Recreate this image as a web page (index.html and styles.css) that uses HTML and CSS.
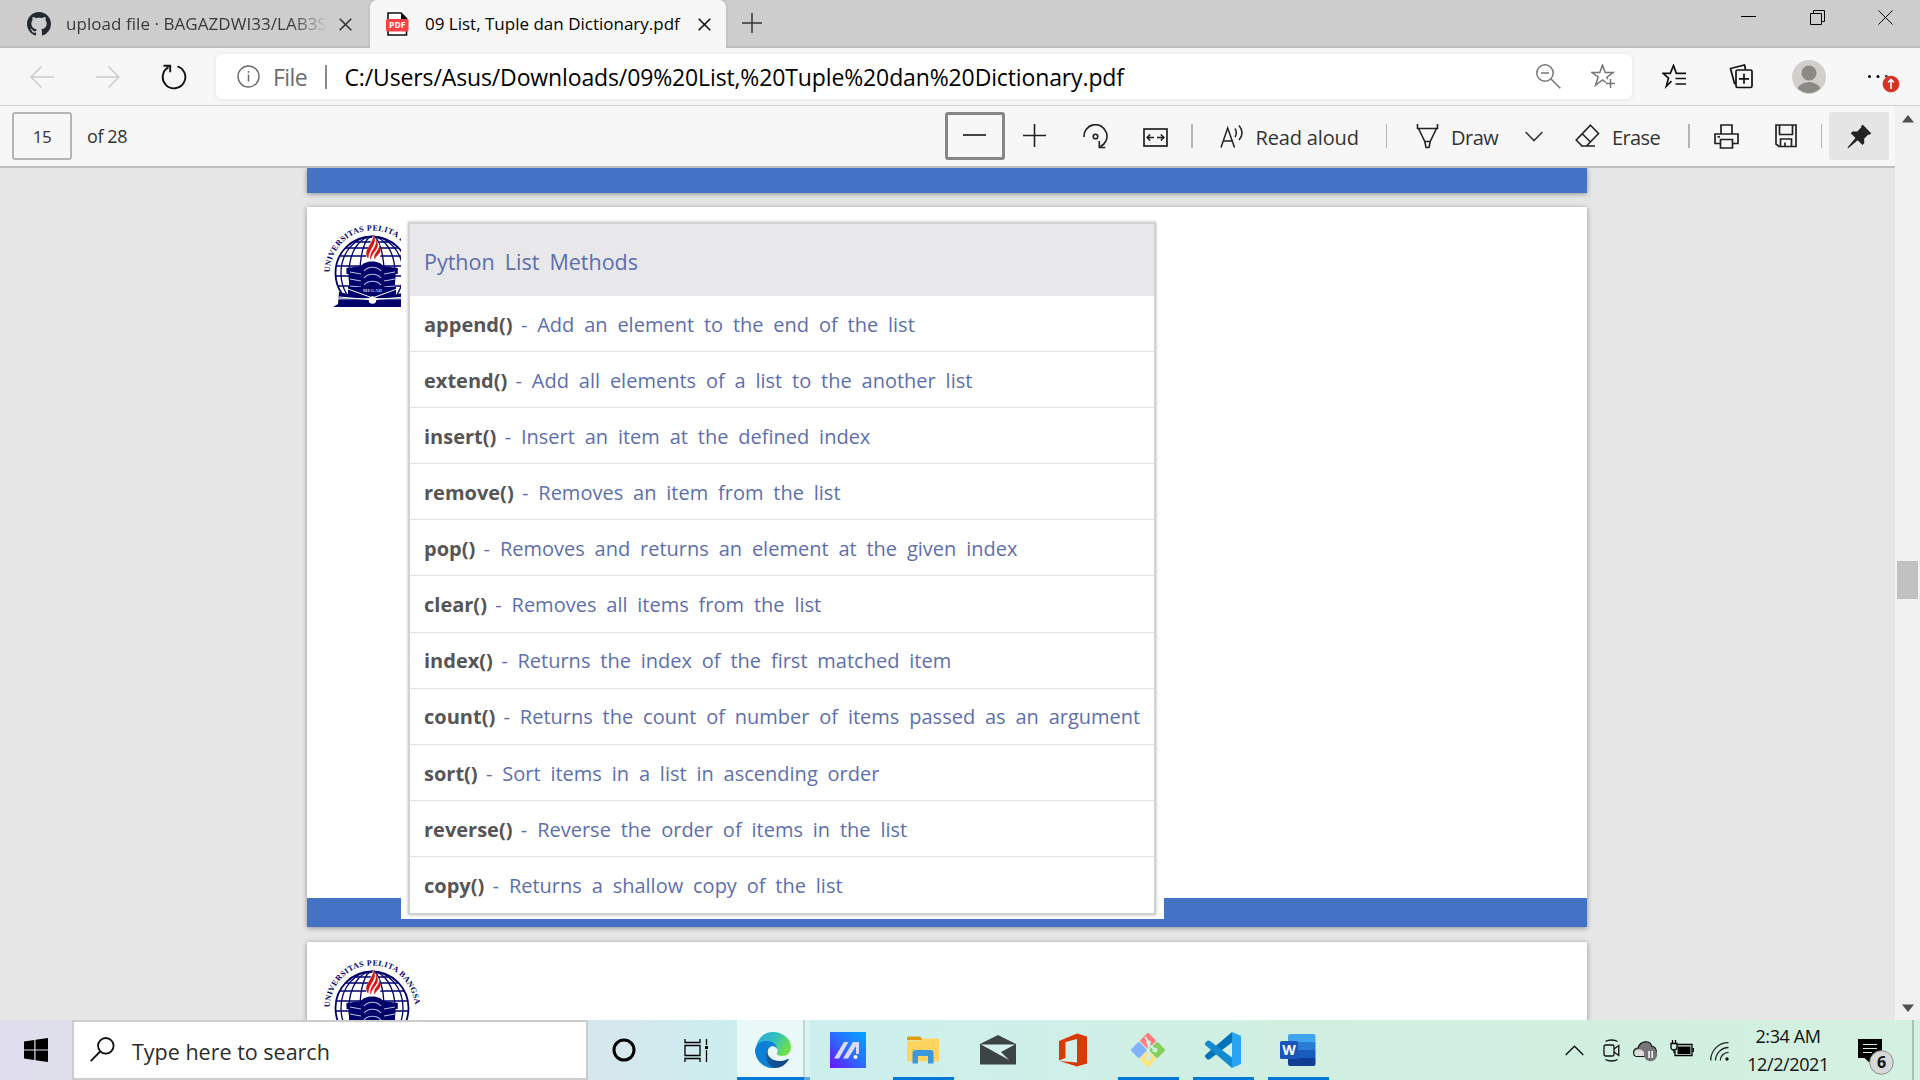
FILE: index.html
```html
<!DOCTYPE html>
<html lang="en">
<head>
<meta charset="utf-8">
<title>09 List, Tuple dan Dictionary.pdf</title>
<link rel="stylesheet" href="styles.css">
</head>
<body>
<svg class="defs" width="0" height="0">
  <defs>
    <clipPath id="globe-clip"><path d="M20 20h86v64H20z"/></clipPath>
    <g id="crest">
      <path id="crest-arc" d="M19.500 62.500C21 38 39 20.500 62.500 20.500S102 37 105.500 62" fill="none"/>
      <text class="crest-name"><textPath href="#crest-arc" textLength="130">UNIVERSITAS PELITA BANGSA</textPath></text>
      <g fill="none" stroke="#00006b" stroke-width="1.300" clip-path="url(#globe-clip)">
        <circle cx="62" cy="63" r="36.500" stroke-width="1.800"/>
        <ellipse cx="62" cy="63" rx="31" ry="36.500"/>
        <ellipse cx="62" cy="63" rx="23" ry="36.500"/>
        <ellipse cx="62" cy="63" rx="12" ry="36.500"/>
        <path d="M44 32h36M35 38h54M30 46h64M27 56h70M26 66h72M28 76h68"/>
      </g>
      <path d="M57 50c-3-9 3-13 6-25 5 7 8 11 7 15 3 4-1 8-3 11-2-2-8-3-10-1z" fill="#fff"/>
      <path d="M58 48c-5-8 4-12 6-23 3 10-5 13-6 23zm2.500 1c-1-8 6-10 6-19 4 9-4 11-6 19zm4 0c-1-6 4-7 5-13 3 8-3 8-5 13z" fill="#cf1515" stroke="#cf1515" stroke-width=".5"/>
      <path d="M47 58l11-2c2-6 14-6 16 0l11 2v6h-2v16H49V64h-2z" fill="#00006b" transform="matrix(1.350 0 0 1 -27 0)"/>
      <path d="M54 61c4-5 13-5 17 0M54 68c4-5 13-5 17 0M54 75c4-5 13-5 17 0M40 62l11 2M40 69l11 2M40 76l11 1M85 62l-11 2M85 69l-11 2M85 76l-11 1" fill="none" stroke="#b9bcdf" stroke-width="1.200"/>
      <path d="M38 77h48v11H38z" fill="#00006b"/>
      <text x="62.500" y="81.500" class="crest-motto">MEGAH</text>
      <path d="M29 82l30 7h7l30-7v5l5 3v7H23l5-3z" fill="#00006b"/>
      <path d="M29 87l30 2.500M95 87l-30 2.500M28 88.800h68M38 79l22 8M87 79l-22 8" stroke="#fff" stroke-width="1"/>
      <circle cx="62.500" cy="90" r="3.800" fill="#fff"/>
    </g>
  </defs>
</svg>

<div class="screen">
  <header class="tabs">
    <div class="tab tab-idle">
      <svg class="octocat" width="24" height="24" viewBox="0 0 16 16" fill="#24292f"><path d="M8 0C3.580 0 0 3.580 0 8c0 3.540 2.290 6.530 5.470 7.590.4.070.55-.17.55-.38 0-.19-.01-.82-.01-1.490-2.010.37-2.530-.49-2.690-.94-.09-.23-.48-.94-.82-1.130-.28-.15-.68-.52-.01-.53.63-.01 1.080.58 1.230.82.72 1.210 1.870.87 2.330.66.07-.52.28-.87.51-1.070-1.780-.2-3.640-.89-3.640-3.950 0-.87.31-1.590.82-2.150-.08-.2-.36-1.020.08-2.120 0 0 .67-.21 2.200.82.64-.18 1.320-.27 2-.27s1.360.09 2 .27c1.530-1.040 2.200-.82 2.200-.82.44 1.100.16 1.920.08 2.120.51.56.82 1.270.82 2.150 0 3.070-1.870 3.750-3.650 3.950.29.25.54.73.54 1.480 0 1.070-.01 1.930-.01 2.200 0 .21.15.46.55.38A8.010 8.010 0 0 0 16 8c0-4.420-3.580-8-8-8z"/></svg>
      <span class="tab-title fade">upload file · BAGAZDWI33/LAB3S</span>
      <svg class="tab-x" width="13" height="13" viewBox="0 0 13 13"><path d="M.7.7l11.600 11.600M12.300.7L.7 12.300"/></svg>
    </div>
    <div class="tab tab-active">
      <svg width="24" height="24" viewBox="0 0 24 24"><path d="M2 1h13L20.500 6.500V23H2z" fill="#fff" stroke="#111" stroke-width="1.600"/><path d="M15 1v6h6z" fill="#111"/><rect x="0" y="7" width="22.500" height="12.500" rx="1.500" fill="#fb4141"/><text x="11.200" y="16.400" class="pdf-label">PDF</text></svg>
      <span class="tab-title">09 List, Tuple dan Dictionary.pdf</span>
      <svg class="tab-x" width="13" height="13" viewBox="0 0 13 13"><path d="M.7.7l11.600 11.600M12.300.7L.7 12.300"/></svg>
    </div>
    <svg class="new-tab" width="20" height="20" viewBox="0 0 20 20"><path d="M10 0v20M0 10h20" stroke="#333" stroke-width="1.500"/></svg>
    <div class="win-buttons">
      <svg width="15" height="15" viewBox="0 0 15 15"><path d="M0 6.500h15"/></svg>
      <svg width="15" height="15" viewBox="0 0 15 15"><path d="M.5 3.500h11v11H.5zM3.500 3.500v-3h11v11h-3"/></svg>
      <svg width="15" height="15" viewBox="0 0 15 15"><path d="M.5.5l14 14M14.500.5l-14 14"/></svg>
    </div>
  </header>

  <nav class="toolbar">
    <svg class="back" width="24" height="22" viewBox="0 0 24 22"><path d="M11.500.5L1 11l10.500 10.500M1 11h23" fill="none" stroke="#ccc" stroke-width="1.500"/></svg>
    <svg class="forward" width="24" height="22" viewBox="0 0 24 22"><path d="M12.500.5L23 11 12.500 21.500M23 11H0" fill="none" stroke="#ccc" stroke-width="1.500"/></svg>
    <svg class="reload" width="26" height="26" viewBox="0 0 26 26"><path d="M16.500 2.300A11.300 11.300 0 1 1 7.500 3.200M2.500 1.800h6.700v6.400" fill="none" stroke="#111" stroke-width="1.900"/></svg>
    <div class="address">
      <svg width="23" height="23" viewBox="0 0 23 23"><circle cx="11.500" cy="11.500" r="10.500" fill="none" stroke="#6b6b6b" stroke-width="1.400"/><path d="M11.500 9.500v7M11.500 6v1.800" stroke="#6b6b6b" stroke-width="1.500"/></svg>
      <span class="scheme">File</span>
      <span class="bar"></span>
      <span class="url">C:/Users/Asus/Downloads/09%20List,%20Tuple%20dan%20Dictionary.pdf</span>
      <svg class="mag" width="25" height="25" viewBox="0 0 25 25" fill="none" stroke="#767676" stroke-width="1.500"><circle cx="9" cy="9" r="8.200"/><path d="M15 15l9.300 9.300M5 9h8"/></svg>
      <svg class="star" width="25" height="25" viewBox="0 0 25 25" fill="none" stroke="#767676" stroke-width="1.500"><path d="M15 18.500L11.500 16 4.500 21.300 7.200 13 1 8.500h7.800L11.500 1l2.700 7.500H22l-6 4.700.6 2M19.500 15v9M15 19.500h9"/></svg>
    </div>
    <svg class="fav" width="25" height="25" viewBox="0 0 25 25" fill="none" stroke="#111" stroke-width="1.700"><path d="M9.500 17.200L4.300 22.300 6.500 14 1 9.300h7.300L11.500 1.500l2.800 7.800H24M13.500 14.500H24M13.500 20H24"/></svg>
    <svg class="coll" width="25" height="25" viewBox="0 0 25 25" fill="none" stroke="#111" stroke-width="1.700"><path d="M7 19.500h-1.500L1.500 4.500 15.500 1l1 4.500"/><rect x="7" y="6" width="16" height="17.500" rx="1.500"/><path d="M15 9.800v10M10 14.800h10"/></svg>
    <svg class="avatar" width="34" height="34" viewBox="0 0 34 34"><circle cx="17" cy="17" r="17" fill="#d0cfcb"/><clipPath id="av"><circle cx="17" cy="17" r="16"/></clipPath><circle cx="17" cy="13" r="7.500" fill="#8b8984"/><ellipse cx="17" cy="31" rx="12" ry="9" fill="#8b8984" clip-path="url(#av)"/></svg>
    <svg class="more" width="34" height="24" viewBox="0 0 34 24"><circle cx="2.500" cy="7.500" r="1.500"/><circle cx="11" cy="7.500" r="1.500"/><circle cx="19.500" cy="7.500" r="1.500"/><circle cx="24" cy="15" r="8.600" fill="#d93025" stroke="#f7f7f7" stroke-width=".5"/><path d="M24 20v-9M21 13.500l3-3 3 3" fill="none" stroke="#fff" stroke-width="1.600"/></svg>
  </nav>

  <main class="content">
    <section class="viewer">
      <div class="pdf-bar">
        <div class="page-box">15</div>
        <span class="page-total">of 28</span>
        <div class="zoom-out"><svg width="23" height="2" viewBox="0 0 23 2"><path d="M0 1h23" stroke="#222" stroke-width="1.700"/></svg></div>
        <svg class="zoom-in" width="23" height="23" viewBox="0 0 23 23"><path d="M11.500 0v23M0 11.500h23" stroke="#222" stroke-width="1.600"/></svg>
        <svg class="rotate" width="25" height="25" viewBox="0 0 25 25" fill="none" stroke="#222" stroke-width="1.600"><path d="M1 13A11.500 11.500 0 1 1 17.500 22.500M16.300 17v6.500h6"/><circle cx="12.500" cy="12.500" r="2.300"/></svg>
        <svg class="fit" width="25" height="19" viewBox="0 0 25 19" fill="none" stroke="#222" stroke-width="1.700"><rect x="1" y="1" width="23" height="17"/><path d="M11 9.500H4.500M7.200 6.500l-3 3 3 3M14 9.500h6.500M17.800 6.500l3 3-3 3"/></svg>
        <span class="sep sep-a"></span>
        <svg class="aloud" width="24" height="24" viewBox="0 0 24 24" fill="none" stroke="#222" stroke-width="1.500"><path d="M1 23.500L7.700 4 14.500 23.500M3.300 17h8.900M15 4.500c1.800 2.800 1.800 5.500 0 8.500M19 1.500c3.800 4.500 3.800 10 0 14.500"/></svg>
        <span class="label label-aloud">Read aloud</span>
        <span class="sep sep-b"></span>
        <svg class="draw" width="23" height="25" viewBox="0 0 23 25" fill="none" stroke="#222" stroke-width="1.600"><path d="M1.500 0v4.500h20V0M2.500 4.500l6.300 13h5.400l6.300-13M8.800 17.500l1.200 6 3 0 1.200-6"/></svg>
        <span class="label label-draw">Draw</span>
        <svg class="chev" width="18" height="11" viewBox="0 0 18 11"><path d="M.6 1L9 9.600 17.400 1" fill="none" stroke="#333" stroke-width="1.500"/></svg>
        <svg class="eraser" width="25" height="24" viewBox="0 0 25 24" fill="none" stroke="#222" stroke-width="1.600"><path d="M15.500 1.200l8 8.300L11.500 22H7L1.200 16zM7 9.500l8.500 8.500M6 22h14"/></svg>
        <span class="label label-erase">Erase</span>
        <span class="sep sep-c"></span>
        <svg class="print" width="25" height="25" viewBox="0 0 25 25" fill="none" stroke="#222" stroke-width="1.700"><path d="M7 10V1h11v9M6.500 19.500H1V10h23v9.500h-5.500"/><path d="M6.500 15.500h12V24h-12z"/><path d="M3.500 12.800H6"/></svg>
        <svg class="save" width="22" height="24" viewBox="0 0 22 24" fill="none" stroke="#222" stroke-width="1.700"><path d="M1 1h20v21.500H4L1 20zM4.500 1v9.500h13V1M5.500 22.500V15h11v7.500M10 22.500v-4"/></svg>
        <span class="sep sep-d"></span>
        <div class="pin"><svg width="25" height="25" viewBox="0 0 25 25"><path d="M15.800.8l8.400 8.400-1.600 1.500-1.300-.2-4.200 4.200.2 4.600-1.800 1.700-4.800-4.800L1.200 24.300.5 23.600l8-9.600L3.800 9.200l1.700-1.800 4.700.2 4.200-4.300-.2-1.200z" fill="#222"/></svg></div>
      </div>

      <div class="doc">
        <div class="page page-prev"></div>
        <div class="page page-current">
          <svg class="crest crest-cut" width="91" height="104" viewBox="0 0 91 104"><use href="#crest"/></svg>
          <div class="sheet">
            <table class="methods">
              <tr><th>Python List Methods</th></tr>
              <tr><td><b>append()</b> - Add an element to the end of the list</td></tr>
              <tr><td><b>extend()</b> - Add all elements of a list to the another list</td></tr>
              <tr><td><b>insert()</b> - Insert an item at the defined index</td></tr>
              <tr><td><b>remove()</b> - Removes an item from the list</td></tr>
              <tr><td><b>pop()</b> - Removes and returns an element at the given index</td></tr>
              <tr><td><b>clear()</b> - Removes all items from the list</td></tr>
              <tr><td><b>index()</b> - Returns the index of the first matched item</td></tr>
              <tr><td><b>count()</b> - Returns the count of number of items passed as an argument</td></tr>
              <tr><td><b>sort()</b> - Sort items in a list in ascending order</td></tr>
              <tr><td><b>reverse()</b> - Reverse the order of items in the list</td></tr>
              <tr><td><b>copy()</b> - Returns a shallow copy of the list</td></tr>
            </table>
          </div>
        </div>
        <div class="page page-next">
          <svg class="crest" width="115" height="104" viewBox="0 0 115 104"><use href="#crest"/></svg>
        </div>
      </div>
    </section>
    <aside class="scrollbar">
      <svg width="12" height="8" viewBox="0 0 12 8"><path d="M0 7.500L6 0l6 7.500z" fill="#505050"/></svg>
      <span class="thumb"></span>
      <svg width="12" height="8" viewBox="0 0 12 8"><path d="M0 .5L6 8l6-7.500z" fill="#505050"/></svg>
    </aside>
  </main>

  <footer class="taskbar">
    <div class="start"><svg width="24" height="24" viewBox="0 0 24 24"><path d="M0 3.500L10.300 2v9.500H0zM11.500 1.800L24 0v11.500H11.500zM0 12.600h10.300V22L0 20.600zM11.500 12.600H24V24l-12.500-1.800z"/></svg></div>
    <div class="search">
      <svg width="25" height="25" viewBox="0 0 25 25" fill="none" stroke="#111" stroke-width="1.800"><circle cx="15.800" cy="8.800" r="7.800"/><path d="M10.200 14.500L.7 24.200"/></svg>
      <span>Type here to search</span>
    </div>
    <div class="cell narrow"><svg width="24" height="24" viewBox="0 0 24 24"><circle cx="12" cy="12" r="10" fill="none" stroke="#000" stroke-width="3"/></svg></div>
    <div class="cell narrow"><svg width="25" height="23" viewBox="0 0 25 23" fill="none" stroke="#000" stroke-width="1.300"><path d="M1 0v3.500h15V0M1 23v-3.500h15V23M1 6.500h15v10H1zM22.500 0v6M22.500 11v12"/><path d="M21 7h3v3h-3z" fill="#000" stroke="none"/></svg></div>
    <div class="cell open active">
      <svg width="36" height="36" viewBox="0 0 36 36">
        <defs><linearGradient id="e1" x1="0" y1="0" x2="1" y2=".5"><stop offset="0" stop-color="#2aa5dc"/><stop offset=".55" stop-color="#33c0bd"/><stop offset="1" stop-color="#6fe04b"/></linearGradient><linearGradient id="e2" x1="0" y1="0" x2="1" y2="1"><stop offset="0" stop-color="#1467ad"/><stop offset="1" stop-color="#0f3f82"/></linearGradient></defs>
        <path d="M1 15C3 6 9 0 18 0c10 0 18 7 18 15 0 6-4 9-9 9-4 0-6-1.500-5-3 2-4-1-8-6-9C9 10 3 11 1 15z" fill="url(#e1)"/>
        <path d="M0 18C1 12 6 9 12 9c6 0 10 4 10 8-1-2-3-3-5-3-5 2-7 8-4 14 2 4 5 7 9 8C10 38 0 29 0 18z" fill="#0c7fd6"/>
        <path d="M14 15c-3 5-1 11 5 13 5 2 10 1 14-1 .8-.4 1 .3.600 1C30 33 26 36 20 36 12 34 8 22 14 15z" fill="url(#e2)"/>
      </svg>
    </div>
    <div class="cell">
      <svg width="36" height="36" viewBox="0 0 36 36"><defs><linearGradient id="as" x1="0" y1="1" x2="1" y2="0"><stop offset="0" stop-color="#6a11ff"/><stop offset=".5" stop-color="#2b6cff"/><stop offset="1" stop-color="#00a8ff"/></linearGradient></defs><path d="M0 0h36v36H0z" fill="url(#as)"/><path d="M4 26.500L14 10h4.500L9 26.500zM13 26.500L23 10h6v12h-3v-8l-8 12.500z" fill="#dcd9ff"/><circle cx="25.500" cy="25" r="2" fill="#fff"/></svg>
    </div>
    <div class="cell open">
      <svg width="32" height="28" viewBox="0 0 32 28"><path d="M0 2C0 1 .5.500 1.500.5H13L16 4H0z" fill="#de9b0a"/><path d="M0 4.500h13.500l2.500-2h15c.7 0 1 .4 1 1V24c0 1-.5 1.500-1.500 1.500h-29C.5 25.500 0 25 0 24z" fill="#ffd35f"/><path d="M5.500 27.500V17c0-2 1-3 3-3h15c2 0 3 1 3 3v10.500H21V20H11v7.500z" fill="#3c97dc"/></svg>
    </div>
    <div class="cell"><svg width="36" height="30" viewBox="0 0 36 30"><path d="M0 9L18 0l18 9v20.500H0z" fill="#3c4444"/><path d="M1 9.500h34L21 17l8 8z" fill="#d6f1ee"/></svg></div>
    <div class="cell"><svg width="28" height="34" viewBox="0 0 28 34"><path d="M0 8L18 .5l10 3v27l-10 3L.5 28 18 29.500V6L6.500 9v16L0 27.500z" fill="#d83b01"/></svg></div>
    <div class="cell open"><svg width="36" height="36" viewBox="0 0 36 36"><g transform="rotate(45 18 18)"><rect x="5.500" y="5.500" width="12" height="12" rx="1.500" fill="#ff7d7d"/><rect x="18.500" y="5.500" width="12" height="12" rx="1.500" fill="#86d057"/><rect x="5.500" y="18.500" width="12" height="12" rx="1.500" fill="#80b2ff"/><rect x="18.500" y="18.500" width="12" height="12" rx="1.500" fill="#ffe380"/></g><path d="M15 5l3.500 5v16M18.500 12l6.500 6" fill="none" stroke="#cff0e6" stroke-width="1.800"/><circle cx="18.500" cy="10.500" r="2.300" fill="#cff0e6"/><circle cx="25" cy="18" r="2.500" fill="#cff0e6"/><circle cx="18.500" cy="26" r="2.500" fill="#cff0e6"/></svg></div>
    <div class="cell open"><svg width="36" height="36" viewBox="0 0 36 36"><path d="M27 0v10.500L5 27c-1 .8-2 .7-3 0l-1.500-1.500c-.8-.9-.7-2 0-2.800z" fill="#0072b8"/><path d="M27 36V25.500L5 9c-1-.8-2-.7-3 0L.5 10.500c-.8.9-.7 2 0 2.800z" fill="#128bd1"/><path d="M27 0l9 4v28l-9 4z" fill="#27a4f2"/></svg></div>
    <div class="cell open"><svg width="36" height="34" viewBox="0 0 36 34"><path d="M8 9V3c0-1 .8-2 2-2h23.500c1 0 2 .8 2 2v6z" fill="#41a5ee"/><path d="M8 9h27.500v8H8z" fill="#2b7cd3"/><path d="M8 17h27.500v8H8z" fill="#185abd"/><path d="M8 25h27.500v6c0 1-.9 2-2 2H10c-1 0-2-1-2-2z" fill="#103f91"/><rect y="8" width="18" height="18" rx="1.500" fill="#1b55bb"/><text x="9" y="21.500" class="word-label">W</text></svg></div>

    <div class="tray">
      <svg class="t-chev" width="19" height="11" viewBox="0 0 19 11"><path d="M.7 10L9.500 1.200 18.300 10" fill="none" stroke="#111" stroke-width="1.400"/></svg>
      <svg class="t-cam" width="17" height="23" viewBox="0 0 17 23" fill="none" stroke="#111" stroke-width="1.300"><rect x="1" y="6" width="10" height="11" rx="1.500"/><path d="M11 10l4.800-3.500v10L11 13M2.500 2.500c3-2 9-2 12 0M2.500 20.500c3 2 9 2 12 0"/></svg>
      <svg class="t-cloud" width="25" height="23" viewBox="0 0 25 23"><path d="M4.500 17.500C-.5 17.500-1 9.500 5 9 7 1.500 17 .500 19 7.500c5 0 6 9 1 10z" fill="#77777b" stroke="#111" stroke-width="1.200"/><path d="M3 17c-3-2-2-6 2-6.500 3-.5 6 1 8 6.500z" fill="#ddd"/><circle cx="17.500" cy="15.500" r="6.700" fill="#747478"/><path d="M16 12v7M19.200 12v7" stroke="#fff" stroke-width="1.500"/></svg>
      <svg class="t-batt" width="24" height="18" viewBox="0 0 24 18"><path d="M7 4.500h15v11H5V11" fill="none" stroke="#000" stroke-width="1.300"/><path d="M7.500 6.500h13v7.500h-13zM22.500 8H24v4h-1.500z"/><path d="M1 3.500h6V7c0 2-1 3-3 3S1 9 1 7zM2.500 0v3.500M5.500 0v3.500M4 10v3" fill="#d3f0e0" stroke="#000" stroke-width="1.300"/></svg>
      <svg class="t-wifi" width="19" height="19" viewBox="0 0 19 19" fill="none" stroke="#222" stroke-width="1.300"><path d="M.7 18.500C.7 8.500 8.500.7 18.500.7M5.500 18.500c0-7 6-13 13-13M10.300 18.500c0-4.500 3.700-8.200 8.200-8.200"/><circle cx="17" cy="17" r="1.700" fill="#111" stroke="none"/></svg>
      <div class="clock"><span class="time">2:34 AM</span><span class="date">12/2/2021</span></div>
      <div class="notes"><svg width="36" height="36" viewBox="0 0 36 36"><path d="M0 0h24v19H12v5l-5.500-5H0z"/><path d="M5 5.500h14M5 9.500h14M5 13.500h9" stroke="#d3f0e0" stroke-width="1.100"/><circle cx="23.500" cy="23.500" r="11.800" fill="#d5d9d7" stroke="#8b908d" stroke-width="1"/><text x="23.500" y="29" class="note-count">6</text></svg></div>
      <span class="peek"></span>
    </div>
  </footer>
</div>
</body>
</html>
```
FILE: styles.css
```css
* { box-sizing: border-box; }
body { margin: 0; font-family: "Open Sans", "Noto Sans", sans-serif; color: #000; overflow: hidden; }
svg { display: block; flex: none; }
.defs { position: absolute; }
.screen { width: 1920px; height: 1080px; display: flex; flex-direction: column; overflow: hidden; }
span { white-space: nowrap; }

/* Tab strip */
.tabs { height: 48px; flex: none; display: flex; background: #cdcdcd; box-shadow: inset 0 -2px 1px #bdbdbd; }
.tab { display: flex; align-items: center; height: 48px; font-size: 17px; }
.tab-idle { width: 370px; padding: 0 0 0 27px; }
.tab-active { width: 356px; padding-left: 16px; background: #f7f7f7; border-radius: 7px 7px 0 0; box-shadow: 0 0 3px #aaa; }
.tab-title { line-height: 24px; margin-left: 15px; }
.fade { width: 261px; overflow: hidden; color: #3a3a3a; letter-spacing: .05px;
  -webkit-mask-image: linear-gradient(90deg, #000 225px, transparent 262px); mask-image: linear-gradient(90deg, #000 225px, transparent 262px); }
.tab-x { margin-left: 12px; stroke: #333; stroke-width: 1.6; }
.tab-active .tab-x { margin-left: 18px; stroke: #111; }
.pdf-label { font: bold 8.5px "Open Sans", sans-serif; fill: #fff; text-anchor: middle; }
.new-tab { margin: 13px 0 0 16px; }
.win-buttons { margin: 10px 27px 0 auto; display: flex; gap: 53.5px; }
.win-buttons svg { fill: none; stroke: #000; stroke-width: 1; }

/* Navigation toolbar */
.toolbar { height: 58px; flex: none; display: flex; align-items: center; background: #f7f7f7; border-bottom: 1px solid #cfcfcf; padding-left: 30px; }
.forward { margin-left: 42px; }
.reload { margin-left: 41px; }
.address { width: 1416px; height: 45px; margin-left: 29px; display: flex; align-items: center; background: #fff; border-radius: 6px; box-shadow: 0 0 5px #e2e2e2; padding-left: 21px; font-size: 23px; }
.address span { line-height: 30px; }
.scheme { color: #6b6b6b; margin-left: 13px; letter-spacing: -.6px; width: 37px; }
.address .bar { width: 1.5px; height: 24px; background: #8a8a8a; margin-left: 15px; }
.url { margin-left: 18px; width: 782px; letter-spacing: -.13px; }
.mag { margin-left: 409px; }
.star { margin-left: 30px; }
.fav { margin-left: 30px; }
.coll { margin-left: 42px; }
.avatar { margin-left: 38px; }
.more { margin: 8px 0 0 41px; }

/* Viewer area */
.content { height: 914px; flex: none; display: flex; }
.viewer { width: 1895px; display: flex; flex-direction: column; }
.pdf-bar { height: 62px; flex: none; display: flex; align-items: center; background: #f7f7f7; border-bottom: 2px solid #bfbfbf; padding-left: 12px; color: #333; }
.page-box { width: 60px; height: 48px; border: 2px solid #b5b5b5; border-radius: 3px; font-size: 17px; line-height: 46px; text-align: center; letter-spacing: -.5px; }
.page-total { margin-left: 15px; font-size: 18px; letter-spacing: -.4px; width: 42px; }
.zoom-out { width: 60px; height: 48px; margin-left: 816px; border: 3px solid #868686; border-radius: 3px; display: flex; align-items: center; padding: 0 0 2px 15px; }
.zoom-in { margin: -2px 0 0 18px; }
.rotate { margin-left: 37px; }
.fit { margin: 2px 0 0 35px; }
.sep { width: 1.5px; height: 24px; background: #b5b5b5; }
.sep-a { margin-left: 23px; }
.aloud { margin-left: 27px; }
.label { font-size: 20px; line-height: 26px; padding-top: 3px; }
.label-aloud { margin-left: 12px; width: 104px; letter-spacing: -.15px; }
.sep-b { margin-left: 26px; }
.draw { margin-left: 29px; }
.label-draw { margin-left: 12px; width: 49px; letter-spacing: -.5px; }
.chev { margin-left: 25px; }
.eraser { margin-left: 32px; }
.label-erase { margin-left: 12px; width: 50px; letter-spacing: -.6px; }
.sep-c { margin-left: 26px; }
.print { margin-left: 24px; }
.save { margin-left: 36px; }
.sep-d { margin-left: 24px; }
.pin { width: 60px; height: 48px; margin-left: 7px; background: #e5e5e5; border-radius: 3px; display: flex; align-items: center; justify-content: center; }

.doc { flex: 1; min-height: 0; overflow: hidden; background: #e6e6e6; display: flex; flex-direction: column; padding-left: 307px; }
.page { width: 1280px; flex: none; background: #fff; box-shadow: 0 1px 5px rgba(0, 0, 0, .38); }
.page-prev { height: 25px; background: #4472c4; }
.page-current { height: 720px; margin-top: 14px; padding: 8px 0 0 3px; display: flex; background: linear-gradient(#fff 691px, #4472c4 691px); }
.page-next { height: 720px; margin-top: 15px; padding: 8px 0 0 3px; }
.crest { overflow: visible; margin-top: -5px; }
.crest-cut { overflow: hidden; }
.crest-name { font: bold 8px "Liberation Serif", serif; fill: #00006b; }
.crest-motto { font: bold 4.5px "Liberation Serif", serif; fill: #d5d6ec; text-anchor: middle; letter-spacing: .3px; }
.sheet { width: 763px; height: 704px; background: #fff; padding: 7px; }
.methods { width: 748px; height: 691px; border: 2px solid #d2d2d4; border-collapse: separate; border-spacing: 0; table-layout: fixed; box-shadow: 0 0 3px #bcbcbe; }
.methods th { height: 72px; padding: 2px 0 0 14px; background: #e8e8ea; text-align: left; font-size: 21.5px; font-weight: 400; color: #5b6eae; word-spacing: 4.5px; white-space: nowrap; }
.methods td { height: 56.1px; padding: 1.5px 0 0 14px; border-bottom: 1px solid #e4e4e6; font-size: 20px; color: #5d6fac; word-spacing: 4.65px; white-space: nowrap; }
.methods tr:last-child td { border-bottom: 0; }
.methods b { color: #555558; margin-right: -1.5px; }

.scrollbar { width: 25px; background: #f1f1f1; display: flex; flex-direction: column; align-items: center; padding: 9px 0 8px; }
.thumb { width: 21px; height: 38px; background: #c1c1c1; margin: 438px 0 auto; }

/* Taskbar */
.taskbar { height: 60px; flex: none; display: flex; background: linear-gradient(90deg, #e0deec 0, #d8e6ee 588px, #cbeeef 735px, #cff0ea 1000px, #d0efe0 1300px, #d3f0e0); }
.start { width: 72px; display: flex; align-items: center; justify-content: center; }
.search { width: 516px; background: #fff; border: 2px solid #ccc; display: flex; align-items: center; padding: 0 0 2px 16px; font-size: 21.5px; color: #2b2b2b; }
.search span { margin-left: 17px; padding-top: 5px; }
.cell { width: 75px; display: flex; align-items: center; justify-content: center; position: relative; padding-right: 2px; }
.cell.narrow { width: 72px; padding-right: 0; }
.narrow + .open { margin-left: 4px; }
.open::after { content: ""; position: absolute; left: 7px; right: 7px; bottom: 0; height: 3px; background: #0078d7; }
.cell.active { background: linear-gradient(90deg, transparent 1px, #ebf8f8 1px 67px, #b9dcda 67px 69px, #dcf4f1 69px 74px, transparent 74px); }
.cell.active::after { left: 1px; right: 1px; background: linear-gradient(90deg, #0078d7 67px, #62a9e4 67px); }
.word-label { font: bold 14px "Open Sans", sans-serif; fill: #fff; text-anchor: middle; }
.tray { margin-left: auto; display: flex; align-items: center; }
.t-cam { margin-left: 19px; }
.t-cloud { margin-left: 13px; }
.t-batt { margin: -2px 0 0 12px; }
.t-wifi { margin: 3px 0 0 16px; }
.clock { width: 90px; margin-left: 14px; display: flex; flex-direction: column; align-items: center; font-size: 18px; line-height: 28px; letter-spacing: -.4px; color: #111; }
.notes { margin: 14px 0 0 25px; }
.note-count { font: bold 16px "Open Sans", sans-serif; text-anchor: middle; fill: #111; }
.peek { width: 2px; height: 60px; margin: 0 6px 0 18px; background: #a9c0b4; }
```
